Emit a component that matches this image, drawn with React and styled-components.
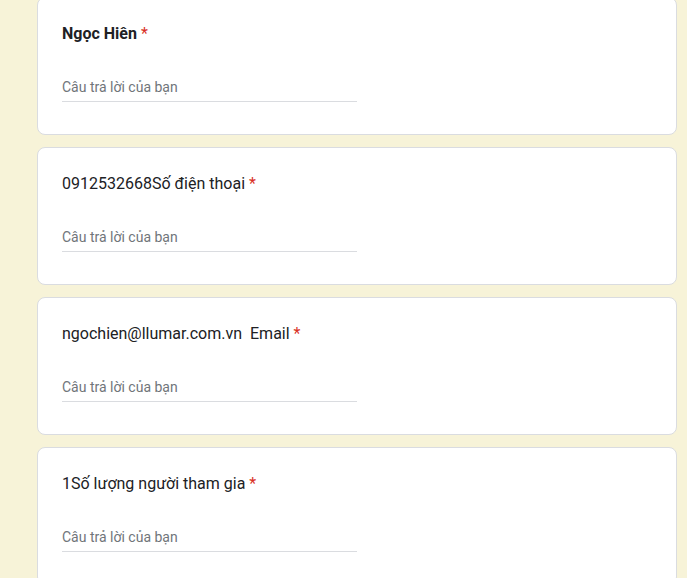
import React from "react";
import styled, { createGlobalStyle } from "styled-components";

const GlobalStyle = createGlobalStyle`
  html, body {
    margin: 0;
    padding: 0;
    background: #f7f3d8;
    font-family: Roboto, "Noto Sans", Arial, sans-serif;
  }
`;

const Page = styled.div`
  display: flex;
  flex-direction: column;
  gap: 12px;
  width: 640px;
  margin: -3px 0 0 37px;
`;

const Card = styled.div`
  background: #fff;
  border: 1px solid #dadce0;
  border-radius: 8px;
  padding: 24px 24px 32px;
`;

const Title = styled.div`
  font-size: 16px;
  line-height: 24px;
  color: #202124;
  font-weight: ${(p) => (p.$bold ? 700 : 400)};
  white-space: pre;
`;

const Star = styled.span`
  color: #d93025;
  font-weight: 400;
`;

const Answer = styled.input`
  display: block;
  box-sizing: border-box;
  width: 295px;
  margin-top: 29px;
  padding: 0 0 2px;
  height: 27px;
  border: none;
  border-bottom: 1px solid #dadce0;
  outline: none;
  font-family: inherit;
  font-size: 14px;
  line-height: 24px;
  color: #202124;
  background: transparent;

  &::placeholder {
    color: #70757a;
  }
`;

const questions = [
  { label: "Ngọc Hiên", bold: true },
  { label: "0912532668Số điện thoại" },
  { label: "ngochien@llumar.com.vn  Email" },
  { label: "1Số lượng người tham gia" },
];

export default function App() {
  return (
    <>
      <GlobalStyle />
      <Page>
        {questions.map((q) => (
          <Card key={q.label}>
            <Title $bold={q.bold}>
              {q.label} <Star>*</Star>
            </Title>
            <Answer placeholder="Câu trả lời của bạn" />
          </Card>
        ))}
      </Page>
    </>
  );
}
